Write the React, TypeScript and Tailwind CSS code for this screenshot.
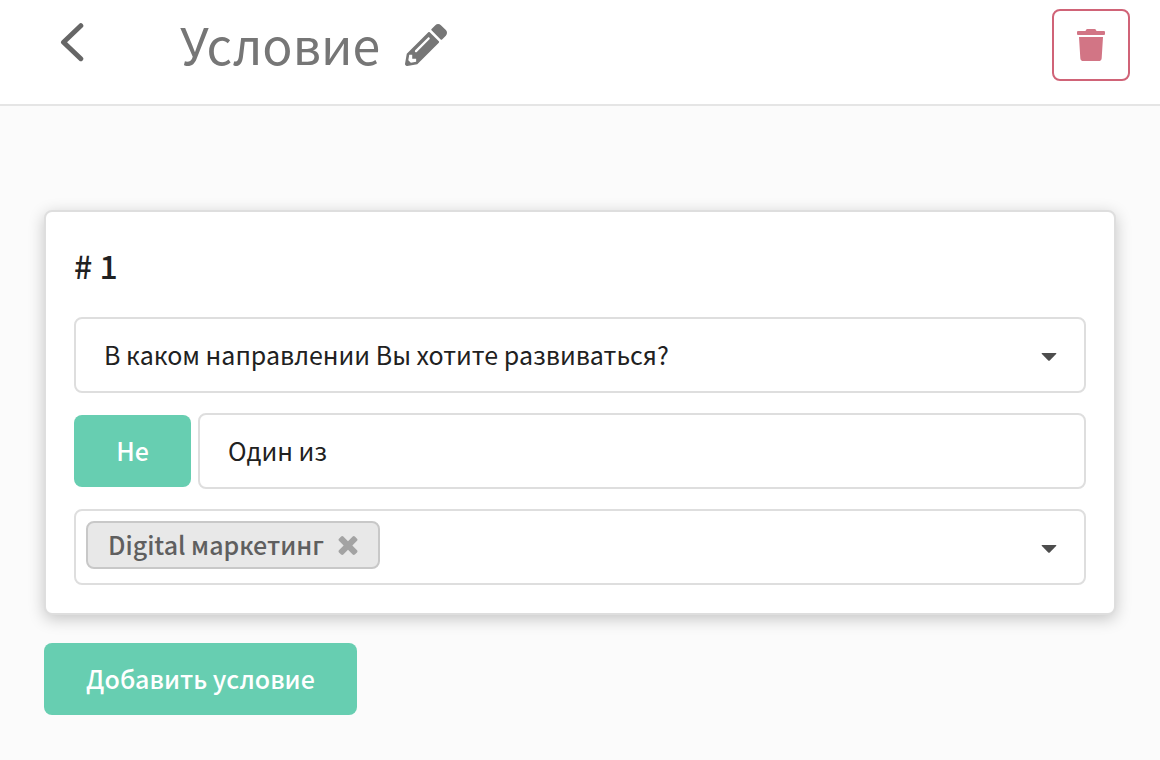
import { useState } from "react";
import { FaPencilAlt, FaTrash } from "react-icons/fa";

function Caret() {
  return (
    <svg className="pointer-events-none h-2 w-4 fill-[#4d4d4d]" viewBox="0 0 16 8" aria-hidden="true">
      <path d="M1.200 0h13.600q1.100 0 .3.900L9 7.300q-1 1-2 0L.9.900Q.100 0 1.200 0z" />
    </svg>
  );
}

function CrossIcon() {
  return (
    <svg className="size-5 fill-[#a3a3a3]" viewBox="302 302 1188 1252" aria-hidden="true">
      <path d="M1490 1322q0 40-28 68l-136 136q-28 28-68 28t-68-28l-294-294-294 294q-28 28-68 28t-68-28l-136-136q-28-28-28-68t28-68l294-294-294-294q-28-28-28-68t28-68l136-136q28-28 68-28t68 28l294 294 294-294q28-28 68-28t68 28l136 136q28 28 28 68t-28 68l-294 294 294 294q28 28 28 68z" />
    </svg>
  );
}

const field = "rounded-lg border-2 border-[#dedede] bg-white";

export default function App() {
  const [tags, setTags] = useState(["Digital маркетинг"]);
  const [negated, setNegated] = useState(false);

  return (
    <div className="min-h-screen bg-[#fbfbfb] font-['Noto_Sans_CJK_SC','Noto_Sans',sans-serif] text-[25px] text-[#212121]">
      <header className="flex items-start border-b-2 border-[#e5e5e5] bg-white pt-2 pr-[30px] pb-6 pl-[60px]">
        <button type="button" aria-label="Назад" className="mt-[15px]">
          <svg className="h-[39px] w-6 fill-none stroke-[#666]" viewBox="0 0 24 39" strokeWidth="5" strokeLinecap="round" strokeLinejoin="round">
            <path d="M20.800 2.700 3.500 19.200 20.800 35.700" />
          </svg>
        </button>
        <h1 className="ml-24 text-[50px] leading-[70px] text-[#767676]">Условие</h1>
        <button type="button" aria-label="Изменить название" className="mt-4 ml-[25px] text-[#767676]">
          <FaPencilAlt className="size-[42px]" />
        </button>
        <button
          type="button"
          aria-label="Удалить"
          className="mt-px -mb-px ml-auto flex h-[72px] w-[78px] items-center justify-center rounded-lg border-2 border-[#d06377] text-[#d27585]"
        >
          <FaTrash className="h-8 w-7" />
        </button>
      </header>

      <main className="px-11 pt-[104px] pb-11">
        <section className="rounded-lg border-2 border-[#dedede] bg-white p-7 shadow-[0_4px_16px_rgba(0,0,0,0.22)]">
          <h2 className="mb-[26px] text-[32px] leading-[51px] font-medium"># 1</h2>
          <div className="flex flex-col gap-5">
            <div className="grid items-center">
              <select aria-label="Вопрос" className={`${field} col-start-1 row-start-1 h-[76px] w-full appearance-none px-7`}>
                <option>В каком направлении Вы хотите развиваться?</option>
              </select>
              <span className="pointer-events-none col-start-1 row-start-1 mr-[29px] flex justify-self-end pt-1">
                <Caret />
              </span>
            </div>

            <div className="flex items-center gap-[7px]">
              <button
                type="button"
                aria-pressed={negated}
                onClick={() => setNegated(!negated)}
                className="h-[72px] w-[117px] rounded-lg bg-[#67ceb1] font-medium text-white"
              >
                Не
              </button>
              <select aria-label="Оператор" className={`${field} h-[76px] flex-1 appearance-none px-7`}>
                <option>Один из</option>
              </select>
            </div>

            <div className={`${field} flex min-h-[76px] items-center justify-between pr-[27px] pl-2.5`}>
              <ul className="mb-1 flex flex-wrap gap-2">
                {tags.map((tag) => (
                  <li key={tag} className="flex h-12 items-center gap-3.5 rounded-lg border-2 border-[#c8c8c8] bg-[#e8e8e8] px-5 font-medium text-[#5f5f5f]">
                    {tag}
                    <button type="button" aria-label={`Убрать ${tag}`} onClick={() => setTags(tags.filter((t) => t !== tag))}>
                      <CrossIcon />
                    </button>
                  </li>
                ))}
              </ul>
              <button type="button" aria-label="Показать варианты" className="flex pt-1">
                <Caret />
              </button>
            </div>
          </div>
        </section>

        <button type="button" className="mt-7 h-[72px] rounded-lg bg-[#67ceb1] px-[42px] font-medium text-white">
          Добавить условие
        </button>
      </main>
    </div>
  );
}
